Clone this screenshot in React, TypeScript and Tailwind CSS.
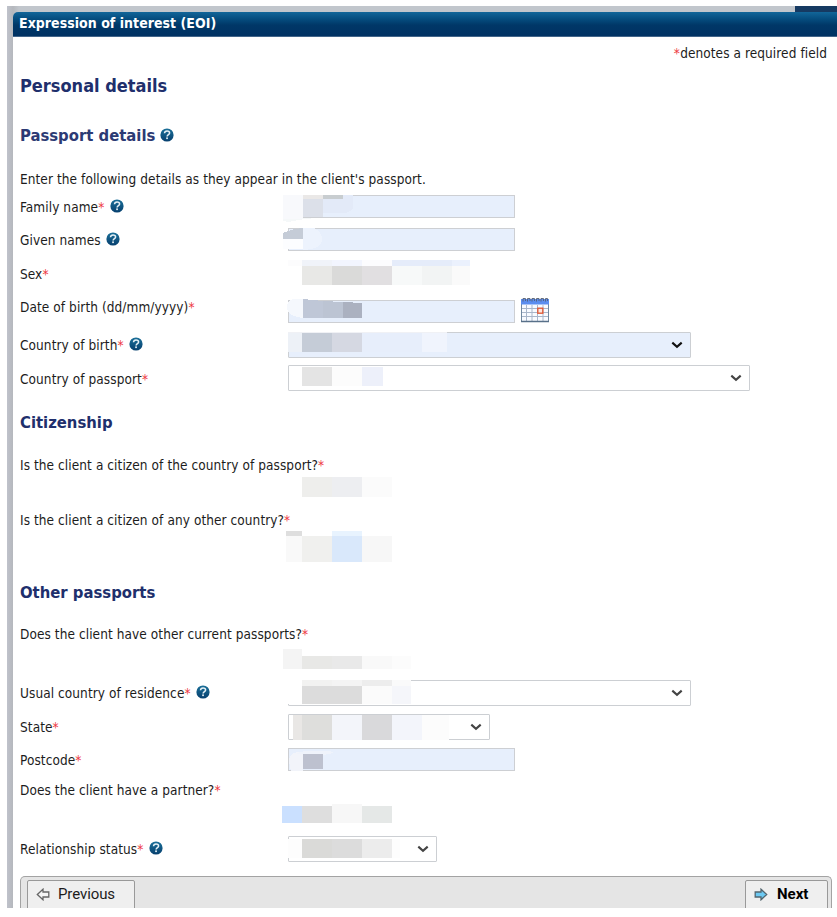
import type { ReactNode } from "react";

function Star() {
  return <span className="text-[#ee3a42] tracking-[0.4px]">*</span>;
}

function Help() {
  return (
    <svg viewBox="0 0 14 14" className="mb-[2px] h-[14px] w-[14px] shrink-0">
      <defs>
        <linearGradient id="help" x1="0" y1="0" x2="0" y2="1">
          <stop offset="0" stopColor="#1b7099" />
          <stop offset="1" stopColor="#063f6e" />
        </linearGradient>
      </defs>
      <circle cx="7" cy="7" r="6.6" fill="url(#help)" />
      <path d="M4.5 5.2C4.6 3.6 5.7 2.9 7 2.9C8.6 2.9 9.6 3.7 9.6 5C9.6 6.6 7.2 6.8 7.1 8.5" fill="none" stroke="#e6f0f6" strokeWidth="1.5" />
      <rect x="6.2" y="9.4" width="1.7" height="1.7" fill="#e6f0f6" />
    </svg>
  );
}

type Block = [number, number, number, number, string];

/* Redaction mosaic laid over a row; blocks are x, y, width, height, colour. */
function Mosaic({ top, blocks, children }: { top: number; blocks: Block[]; children?: ReactNode }) {
  return (
    <svg viewBox={`280 ${top} 200 40`} className="pointer-events-none absolute top-0 left-[260px] h-[40px] w-[200px] overflow-visible" shapeRendering="crispEdges">
      {children}
      {blocks.map(([x, y, w, h, c]) => (
        <rect key={`${x}-${y}`} x={x} y={y} width={w} height={h} fill={c} />
      ))}
    </svg>
  );
}

function Row({ className, label, required, help, children }: { className: string; label: string; required?: boolean; help?: boolean; children?: ReactNode }) {
  return (
    <div className={`relative flex shrink-0 items-start ${className}`}>
      <div className="flex w-[268px] shrink-0 items-center leading-[18px] whitespace-nowrap">
        <span>{label}</span>
        {required && <Star />}
        {help && <span className="ml-[5px]"><Help /></span>}
      </div>
      {children}
    </div>
  );
}

function Input({ className = "" }: { className?: string }) {
  return <div className={`h-[23px] w-[227px] shrink-0 border border-[#cdcfd3] bg-[#e7effc] ${className}`} />;
}

function Select({ className, dark }: { className: string; dark?: boolean }) {
  return (
    <div className={`flex h-[26px] shrink-0 items-center justify-end rounded-[1px] border border-[#cccfd3] pr-[7px] ${className}`}>
      <svg viewBox="0 0 12 8" className="h-[8px] w-[12px]">
        <path d="M1.3 1.6L6 5.8L10.7 1.6" fill="none" stroke={dark ? "#111" : "#444"} strokeWidth="2.1" />
      </svg>
    </div>
  );
}

function Calendar() {
  return (
    <svg viewBox="0 0 30 26" className="mt-[7px] ml-[5px] h-[26px] w-[30px] shrink-0">
      <rect x="1.5" y="3" width="27" height="21.5" fill="#f8faff" stroke="#7088a0" />
      <rect x="1" y="2" width="28" height="5.5" fill="#5b8def" />
      <path d="M6.5 8V24M12 8V24M17.5 8V24M23 8V24M2 11.5H28M2 15.5H28M2 19.5H28" stroke="#a9b6ca" />
      <path d="M1 24.5H29" stroke="#587089" strokeWidth="1.5" />
      <path d="M3 4.5V1.5H5.5V4M7.5 4.5V1.5H10V4M12 4.5V1.5H14.5V4M16.5 4.5V1.5H19V4M21 4.5V1.5H23.5V4M25.5 4.5V1.5H27.5V4" fill="none" stroke="#555f70" strokeWidth="0.9" />
      <rect x="17.8" y="11.2" width="5" height="5" fill="#fbe6df" stroke="#e0532f" strokeWidth="1.3" />
    </svg>
  );
}

function Arrow({ next }: { next?: boolean }) {
  return (
    <svg viewBox="0 0 14 13" className={`h-[13px] w-[14px] shrink-0 ${next ? "" : "-scale-x-100"}`}>
      <path d="M1.2 4H7V1.2L12.7 6.5L7 11.8V9H1.2Z" fill={next ? "#6dc9f2" : "#f5f5f5"} stroke={next ? "#53666f" : "#666"} strokeWidth="1.3" />
    </svg>
  );
}

export default function App() {
  return (
    <div className="h-[917px] w-[837px] overflow-hidden bg-white pt-[6px] pl-[7px] font-['DejaVu_Sans_Condensed','DejaVu_Sans',sans-serif] text-[13.5px] tracking-[0.08px] text-[#1c1c1c] [font-stretch:condensed]">
      <div className="flex h-[902px] flex-col bg-linear-to-r from-[#bfc2cb] via-[#b5b8bd] via-[6px] to-[#c1c6cc] to-[12px]">
        <div className="flex h-[6px] shrink-0 justify-end">
          <div className="w-[42px] bg-[#163a62]" />
        </div>
        <div className="ml-[6px] flex min-h-0 flex-1 flex-col rounded-tl-[6px] bg-white">
          <div className="h-[25px] shrink-0 rounded-tl-[5px] border-b border-[#42658a] bg-linear-to-b from-[#126699] via-[#003767] via-55% to-[#003263] pl-[6px] text-[14px] leading-[23px] font-bold text-white">
            <span className="tracking-[0.03px]">Expression of interest (EOI)</span>
          </div>
          <div className="flex flex-1 flex-col pr-[5px] pl-[7px]">
            <div className="flex h-[33px] shrink-0 items-center justify-end pr-[5px] pb-[1px]">
              <Star />
              <span>denotes a required field</span>
            </div>
            <h1 className="flex h-[32px] shrink-0 items-center pb-[2px] text-[18px] font-bold tracking-normal text-[#202f6c]"><span>Personal details</span></h1>
            <h2 className="flex h-[68px] shrink-0 items-center gap-[5px] text-[16.5px] font-bold tracking-normal text-[#2c3a74]"><span>Passport details</span><Help /></h2>
            <p className="h-[18px] shrink-0 leading-[18px]">Enter the following details as they appear in the client's passport.</p>

            <Row className="h-[36px] [&>div:first-child]:pt-[10px]" label="Family name" required help>
              <Input className="mt-[7px]" />
              <Mosaic top={188} blocks={[[283, 195, 20, 24, "#f8f9fc"], [303, 195, 20, 4, "#eae8e7"], [323, 195, 20, 4, "#c8cdd0"], [303, 199, 20, 18, "#dce0e9"]]}>
                <path d="M323 195H353V208Q350 213 343 213H323Z" fill="#e3eaf8" />
                <path d="M283 218H318Q300 219 289 222L283 221Z" fill="#f5f8f9" />
              </Mosaic>
            </Row>
            <Row className="h-[33px] [&>div:first-child]:pt-[7px]" label="Given names" help>
              <Input className="mt-[4px]" />
              <Mosaic top={224} blocks={[[283, 239, 20, 10, "#fcfdff"]]}>
                <path d="M303 228H314Q322 232 322 239Q322 249 303 250Z" fill="#edf3fd" />
                <path d="M283 239V233Q291 229 303 228V239Z" fill="#c5ccd7" />
              </Mosaic>
            </Row>
            <Row className="h-[33px] [&>div:first-child]:pt-[8px]" label="Sex" required>
              <Mosaic top={257} blocks={[[288, 260, 14, 6, "#fcfcfd"], [302, 260, 30, 6, "#f0f3f9"], [332, 260, 30, 6, "#f2f5fe"], [362, 260, 30, 6, "#fcfcfe"], [392, 260, 60, 6, "#e5ecfa"], [452, 260, 18, 6, "#ebf1fd"], [302, 266, 30, 19, "#e8e8e6"], [332, 266, 30, 19, "#dadad9"], [362, 266, 30, 19, "#e1dfe1"], [392, 266, 30, 19, "#f7f9f9"], [422, 266, 30, 19, "#f2f4f4"], [452, 266, 18, 19, "#fafafa"]]} />
            </Row>
            <Row className="h-[38px] [&>div:first-child]:pt-[8px]" label="Date of birth (dd/mm/yyyy)" required>
              <Input className="mt-[10px]" />
              <Calendar />
              <Mosaic top={290} blocks={[]}>
                <path d="M303 299H293Q287 301 287 308Q288 316 303 318Z" fill="#f5f8fd" />
                <path d="M303 299L323 301V318H303Z" fill="#bfc7d7" />
                <path d="M323 301L343 302V318H323Z" fill="#bcc4d3" />
                <path d="M343 302L362 303V318H343Z" fill="#abb1c0" />
              </Mosaic>
            </Row>
            <Row className="h-[34px] [&>div:first-child]:pt-[8px]" label="Country of birth" required help>
              <Select dark className="mt-[4px] w-[403px] bg-[#e7effc]" />
              <Mosaic top={328} blocks={[[288, 332, 159, 1, "#f0f1f5"], [288, 333, 14, 19, "#edf1f7"], [302, 333, 30, 19, "#c5ccd7"], [332, 333, 30, 19, "#d5d8e2"], [362, 333, 60, 19, "#e7eefb"], [422, 333, 25, 19, "#f0f4fd"]]} />
            </Row>
            <Row className="h-[34px] [&>div:first-child]:pt-[8px]" label="Country of passport" required>
              <Select className="mt-[3px] w-[462px]" />
              <Mosaic top={362} blocks={[[302, 367, 30, 19, "#e4e4e4"], [332, 367, 30, 19, "#fcfcfc"], [362, 367, 21, 19, "#edf0fa"]]} />
            </Row>

            <h2 className="flex h-[55px] shrink-0 items-center text-[16.5px] font-bold tracking-normal text-[#202f6c]"><span>Citizenship</span></h2>
            <Row className="h-[55px] [&>div:first-child]:pt-[5px]" label="Is the client a citizen of the country of passport?" required>
              <Mosaic top={451} blocks={[[302, 477, 30, 20, "#eeeeec"], [332, 477, 30, 20, "#edeef1"], [362, 477, 30, 20, "#fbfbfb"]]} />
            </Row>
            <Row className="h-[60px] [&>div:first-child]:pt-[5px]" label="Is the client a citizen of any other country?" required>
              <Mosaic top={506} blocks={[[286, 531, 16, 5, "#dedede"], [286, 536, 16, 26, "#f9f9f9"], [302, 536, 30, 26, "#f0f0ee"], [332, 531, 30, 5, "#e8f3fe"], [332, 536, 30, 26, "#d9e8fb"], [362, 536, 30, 26, "#f7f7f7"]]} />
            </Row>

            <h2 className="flex h-[54px] shrink-0 items-center text-[16.5px] font-bold tracking-normal text-[#202f6c]"><span>Other passports</span></h2>
            <Row className="h-[56px] [&>div:first-child]:pt-[5px]" label="Does the client have other current passports?" required>
              <Mosaic top={620} blocks={[[283, 649, 19, 20, "#f4f4f4"], [302, 656, 30, 13, "#e8e8e6"], [332, 656, 30, 13, "#e9e9e9"], [362, 656, 30, 13, "#f9f9f9"], [392, 656, 19, 13, "#fcfcfc"]]} />
            </Row>
            <Row className="h-[34px] [&>div:first-child]:pt-[8px]" label="Usual country of residence" required help>
              <Select className="mt-[4px] w-[403px]" />
              <Mosaic top={676} blocks={[[288, 680, 14, 24, "#ffffff"], [302, 680, 30, 6, "#f2f2f1"], [332, 680, 30, 6, "#f4f4f4"], [362, 680, 30, 6, "#ededed"], [392, 680, 19, 6, "#fafafa"], [302, 686, 60, 18, "#dcdcdc"], [362, 686, 30, 18, "#fbfbfb"], [392, 686, 19, 18, "#f5f6fa"]]} />
            </Row>
            <Row className="h-[34px] [&>div:first-child]:pt-[8px]" label="State" required>
              <Select className="mt-[4px] w-[202px]" />
              <Mosaic top={710} blocks={[[293, 715, 9, 25, "#e9e7e5"], [302, 715, 30, 25, "#dededc"], [332, 715, 30, 25, "#f3f5fa"], [362, 715, 30, 25, "#d9d9db"], [392, 715, 30, 25, "#f3f5fb"], [422, 715, 27, 25, "#fcfcfc"]]} />
            </Row>
            <Row className="h-[34px] [&>div:first-child]:pt-[7px]" label="Postcode" required>
              <Input className="mt-[4px]" />
              <Mosaic top={744} blocks={[[303, 754, 20, 15, "#bdc1cf"]]}>
                <path d="M303 752H297Q289 754 289 762L291 771H303Z" fill="#f2f4fa" />
                <path d="M297 753Q303 750 330 751L334 753L323 755V754H297Z" fill="#eff3fb" />
              </Mosaic>
            </Row>
            <Row className="h-[54px] [&>div:first-child]:pt-[3px]" label="Does the client have a partner?" required>
              <Mosaic top={778} blocks={[[282, 806, 20, 17, "#cae0ff"], [302, 806, 30, 17, "#dedede"], [332, 804, 30, 19, "#f7f7f7"], [362, 806, 30, 17, "#e5e8e7"]]} />
            </Row>
            <Row className="h-[44px] [&>div:first-child]:pt-[8px]" label="Relationship status" required help>
              <Select className="mt-[4px] w-[149px]" />
              <Mosaic top={832} blocks={[[288, 839, 14, 19, "#fdfdfd"], [302, 839, 30, 19, "#dadad8"], [332, 839, 30, 19, "#dcdcdc"], [362, 839, 30, 19, "#ececec"], [392, 839, 8, 19, "#fdfdfd"]]} />
            </Row>

            <div className="flex h-[32px] shrink-0 justify-between overflow-hidden rounded-t-[5px] border border-b-0 border-[#a3a3a3] bg-[#e5e5e5] pt-[3px] pr-[3px] pl-[6px] font-['Roboto','Liberation_Sans',sans-serif] text-[15px] tracking-normal [font-stretch:normal]">
              <button className="flex h-[30px] w-[108px] items-center rounded-[2px] border border-[#999] bg-[#efefef] pb-[2px] pl-[8px]">
                <Arrow />
                <span className="ml-[8px] tracking-[-0.1px]">Previous</span>
              </button>
              <button className="flex h-[30px] w-[83px] items-center rounded-[2px] border border-[#999] bg-[#efefef] pb-[2px] pl-[8px] font-bold text-black">
                <Arrow next />
                <span className="ml-[9px]">Next</span>
              </button>
            </div>
          </div>
        </div>
      </div>
    </div>
  );
}
